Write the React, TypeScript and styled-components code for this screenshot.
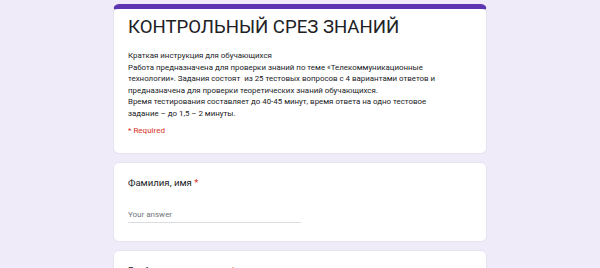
import styled, { createGlobalStyle } from 'styled-components';

const GlobalStyle = createGlobalStyle`
  html, body {
    margin: 0;
    padding: 0;
    background: #efebf8;
  }
  body {
    font-family: Roboto, "Noto Sans", Arial, sans-serif;
    color: #202124;
  }
`;

const Page = styled.div`
  width: 374px;
  margin: 0 auto;
  padding-top: 4px;
  display: flex;
  flex-direction: column;
  gap: 8px;
  height: 264px;
  overflow: hidden;
`;

const Card = styled.section<{ $header?: boolean }>`
  background: #fff;
  border-radius: 6px;
  border: 1px solid #e6e2ee;
  border-top: ${(p) => (p.$header ? '5px solid #5e35b1' : '1px solid #e6e2ee')};
  padding: ${(p) => (p.$header ? '6px 14px 16px' : '13px 14px 18px')};
  flex-shrink: 0;
`;

const Title = styled.h1`
  margin: 0;
  font-size: 18.6px;
  line-height: 24px;
  font-weight: 400;
  color: #202124;
`;

const Description = styled.div`
  margin-top: 11px;
  font-size: 7.9px;
  line-height: 11.6px;
  color: #202124;
  white-space: nowrap;
`;

const Required = styled.div`
  margin-top: 5px;
  font-size: 8px;
  line-height: 12px;
  color: #d93025;
`;

const Label = styled.div`
  font-size: 9.6px;
  line-height: 14px;
  color: #202124;
`;

const Star = styled.span`
  color: #d93025;
`;

const Answer = styled.div`
  margin-top: 20px;
  width: 173px;
  padding-bottom: 3px;
  border-bottom: 1px solid #dadce0;
  font-size: 8px;
  line-height: 9px;
  color: #70757a;
`;

export default function App() {
  return (
    <>
      <GlobalStyle />
      <Page>
        <Card $header>
          <Title>КОНТРОЛЬНЫЙ СРЕЗ ЗНАНИЙ</Title>
          <Description>
            Краткая инструкция для обучающихся
            <br />
            Работа предназначена для проверки знаний по теме «Телекоммуникационные
            <br />
            технологии». Задания состоят&nbsp; из 25 тестовых вопросов с 4 вариантами ответов и
            <br />
            предназначена для проверки теоретических знаний обучающихся.
            <br />
            Время тестирования составляет до 40-45 минут, время ответа на одно тестовое
            <br />
            задание – до 1,5 – 2 минуты.
          </Description>
          <Required>* Required</Required>
        </Card>
        <Card>
          <Label>
            Фамилия, имя <Star>*</Star>
          </Label>
          <Answer>Your answer</Answer>
        </Card>
        <Card>
          <Label>
            Глобальная сеть – это <Star>*</Star>
          </Label>
          <Answer>Your answer</Answer>
        </Card>
      </Page>
    </>
  );
}
